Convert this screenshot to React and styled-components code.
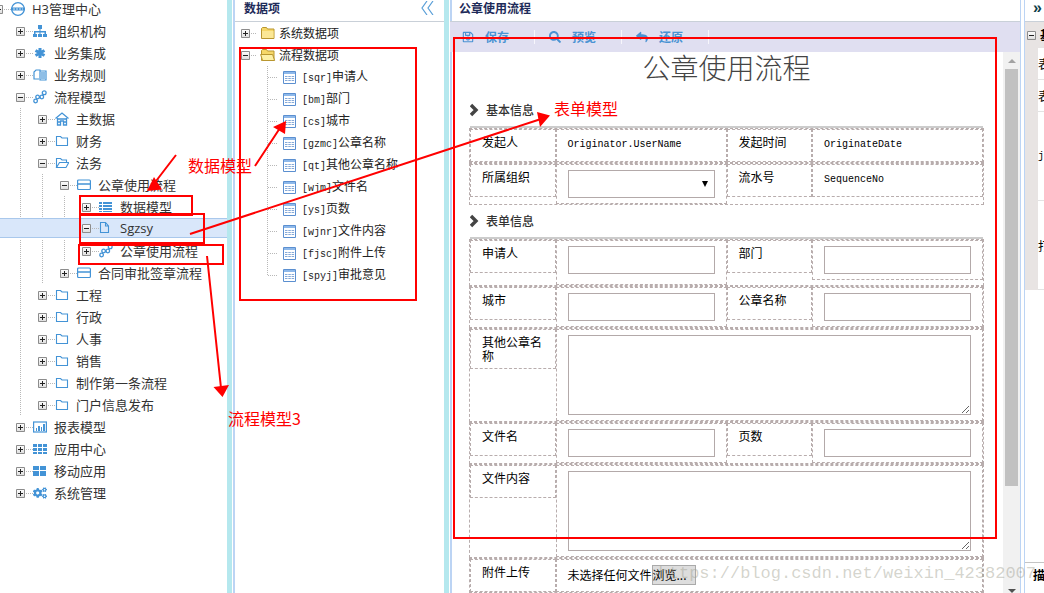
import React from 'react';
import styled, { createGlobalStyle } from 'styled-components';
import { FaCogs, FaSearch, FaReply, FaRegSave } from 'react-icons/fa';

const treeNodes = [
    { depth: 0, open: true, icon: 'globe', label: 'H3管理中心' },
    { depth: 1, icon: 'sitemap', label: '组织机构' },
    { depth: 1, icon: 'asterisk', label: '业务集成' },
    { depth: 1, icon: 'rules', label: '业务规则' },
    { depth: 1, open: true, icon: 'flow', label: '流程模型' },
    { depth: 2, icon: 'home', label: '主数据' },
    { depth: 2, icon: 'folder', label: '财务' },
    { depth: 2, open: true, icon: 'folderOpen', label: '法务' },
    { depth: 3, open: true, icon: 'card', label: '公章使用流程' },
    { depth: 4, icon: 'list', label: '数据模型' },
    { depth: 4, open: true, icon: 'file', label: 'Sgzsy', selected: true },
    { depth: 4, icon: 'flow', label: '公章使用流程' },
    { depth: 3, icon: 'card', label: '合同审批签章流程' },
    { depth: 2, icon: 'folder', label: '工程' },
    { depth: 2, icon: 'folder', label: '行政' },
    { depth: 2, icon: 'folder', label: '人事' },
    { depth: 2, icon: 'folder', label: '销售' },
    { depth: 2, icon: 'folder', label: '制作第一条流程' },
    { depth: 2, icon: 'folder', label: '门户信息发布' },
    { depth: 1, icon: 'chart', label: '报表模型' },
    { depth: 1, icon: 'grid9', label: '应用中心' },
    { depth: 1, icon: 'grid4', label: '移动应用' },
    { depth: 1, icon: 'cogs', label: '系统管理' },
];

const dataItems = [
    ['sqr', '申请人'],
    ['bm', '部门'],
    ['cs', '城市'],
    ['gzmc', '公章名称'],
    ['qt', '其他公章名称'],
    ['wjm', '文件名'],
    ['ys', '页数'],
    ['wjnr', '文件内容'],
    ['fjsc', '附件上传'],
    ['spyj', '审批意见'],
];

const shapes = {
    globe: (
        <g fill="none" stroke="currentColor">
            <circle cx="7" cy="7" r="6.3" strokeWidth="1.2" />
            <path d="M0 7h14" strokeWidth="3" />
            <path d="M2 7h10" stroke="#cfe3f5" strokeDasharray="2 1" />
        </g>
    ),
    sitemap: (
        <path d="M5 1h4v4H7.500v2H13v3h1v3h-4v-3h1.500V8.500h-4V10H9v3H5v-3h1.500V8.500h-4V10H4v3H0v-3h1V7h5.500V5H5z" fill="currentColor" />
    ),
    asterisk: (
        <path d="M7 2v10M2.500 4.500l9 5M11.500 4.500l-9 5" fill="none" stroke="currentColor" strokeWidth="3" />
    ),
    rules: (
        <g fill="none" stroke="currentColor" strokeWidth="1.2">
            <path d="M6 11H1V4l2-2h4v10h6V3H7" />
            <path d="M9 4v7M11 4v7" />
        </g>
    ),
    flow: (
        <g fill="none" stroke="currentColor" strokeWidth="1.3">
            <circle cx="2.6" cy="11" r="1.8" />
            <circle cx="4.6" cy="7" r="1.8" />
            <circle cx="8.8" cy="7" r="1.8" />
            <circle cx="11.2" cy="2.8" r="1.9" />
            <path d="M6 7.500h1.500M10 5.500l.5-1" />
        </g>
    ),
    home: (
        <g fill="none" stroke="currentColor" strokeWidth="1.3">
            <path d="M.5 6.500L7 1l6.500 5.500" />
            <path d="M2.500 6v7h3V9h3v4h3V6M2 7h10M3 10h3M8 10h3" />
        </g>
    ),
    folder: <path d="M1.500 11.500v-9h4L7 4h5.500v7.500z" fill="none" stroke="currentColor" strokeWidth="1.1" />,
    folderOpen: (
        <path
            d="M1.500 11.500v-9h4L7 4h4.500v2.500M1.500 11.500l3-5h9.300l-2.800 5z"
            fill="none"
            stroke="currentColor"
            strokeWidth="1.1"
        />
    ),
    card: (
        <g fill="none" stroke="currentColor">
            <rect x=".6" y="2" width="12.8" height="9.500" rx="1" strokeWidth="1.2" />
            <path d="M1 6h12" strokeWidth="1.5" />
        </g>
    ),
    list: (
        <path d="M0 2h3v2H0zM4 2h9v2H4zM0 5h3v2H0zM4 5h9v2H4zM0 8h3v2H0zM4 8h9v2H4zM0 11h3v1H0zM4 11h9v1H4z" fill="currentColor" />
    ),
    file: (
        <path d="M1.500 1.500h5l3 3.500v6.500h-8zM6.500 1.500V5h3" fill="none" stroke="currentColor" strokeWidth="1.1" />
    ),
    chart: (
        <g>
            <rect x=".6" y="2" width="12.800" height="10" fill="none" stroke="currentColor" strokeWidth="1.2" />
            <path d="M3 8h1v3H3zM5 6h2v5H5zM8 7h1v4H8zM10 4h2v7h-2z" fill="currentColor" />
        </g>
    ),
    grid9: (
        <path d="M0 2h4v3H0zM5 2h4v3H5zM10 2h4v3h-4zM0 6h4v3H0zM5 6h4v3H5zM10 6h4v3h-4zM0 10h4v2H0zM5 10h4v2H5zM10 10h4v2h-4z" fill="currentColor" />
    ),
    grid4: <path d="M0 2h6v4H0zM7 2h6v4H7zM0 7h6v5H0zM7 7h6v5H7z" fill="currentColor" />,
};

function NodeIcon({ name }) {
    if (name === 'cogs') return <FaCogs size={14} />;
    return <svg width="14" height="14" viewBox="0 0 14 14">{shapes[name]}</svg>;
}

function Toggle({ open }) {
    return (
        <ToggleButton type="button" aria-label={open ? '收起' : '展开'}>
            <svg width="9" height="9" viewBox="0 0 9 9">
                <path d={open ? 'M2 4h5v1H2z' : 'M2 4h5v1H2zM4 2h1v5H4z'} fill="#222" />
            </svg>
        </ToggleButton>
    );
}

function YellowFolder({ open }) {
    return (
        <svg width="16" height="14" viewBox="0 0 16 14">
            <path d="M1.500 12.500v-10l1-1h4l1 1.500h6.500v9.500z" fill="#f6d768" stroke="#b8962f" />
            {open
                ? <path d="M.6 6.500h12l2 6h-12z" fill="#fdf0a6" stroke="#b8962f" />
                : <path d="M2 5h11.500v7H2z" fill="#fbe795" />}
        </svg>
    );
}

function TableIcon() {
    return (
        <svg width="13" height="13" viewBox="0 0 13 13">
            <path d="M.5.5h12v12H.5z" fill="#fff" stroke="#5b8fd0" />
            <path d="M1 1h11v2H1z" fill="#8db8ea" />
            <path d="M2 5.500h2.500M5.300 5.500h2.500M8.600 5.500h2.500M2 7.500h2.500M5.300 7.500h2.500M8.600 7.500h2.500M2 9.500h2.500M5.300 9.500h2.500M8.600 9.500h2.500" stroke="#85a9d8" />
        </svg>
    );
}

function SectionHead({ children }) {
    return (
        <SectionTitle>
            <svg width="9" height="14" viewBox="0 0 9 14">
                <path d="M1 2l5 5-5 5" fill="none" stroke="#444" strokeWidth="3.4" />
            </svg>
            {children}
        </SectionTitle>
    );
}

function TextField({ id, label, tall }) {
    return (
        <>
            <Cell><label htmlFor={id}>{label}</label></Cell>
            <Cell $tall={tall}><Input id={id} type="text" /></Cell>
        </>
    );
}

function AreaField({ id, label }) {
    return (
        <FormRow>
            <Cell><label htmlFor={id}>{label}</label></Cell>
            <Cell $wide><TextArea id={id} /></Cell>
        </FormRow>
    );
}

function App() {
    return (
        <Page>
            <GlobalStyle />

            <Sidebar>
                <TreeList>
                    {treeNodes.map((node, i) => (
                        <TreeRow key={i} $selected={node.selected}>
                            {Array.from({ length: node.depth }, (_, level) => (
                                <Guide key={level} $line={level > 0 && !node.selected} />
                            ))}
                            <Toggle open={node.open} />
                            <Dots $width={8} />
                            <IconBox><NodeIcon name={node.icon} /></IconBox>
                            <TreeLabel>{node.label}</TreeLabel>
                        </TreeRow>
                    ))}
                </TreeList>
            </Sidebar>

            <Splitter />

            <DataPanel>
                <PanelHeader>
                    数据项
                    <CollapseButton type="button" aria-label="折叠">
                        <svg width="14" height="14" viewBox="0 0 14 14">
                            <path d="M6 0L1 7l5 7M12 0L7 7l5 7" fill="none" stroke="#5a9fd8" strokeWidth="1.2" />
                        </svg>
                    </CollapseButton>
                </PanelHeader>
                <DataTree>
                    <DataRow>
                        <Toggle />
                        <Dots $width={6} />
                        <FolderBox><YellowFolder /></FolderBox>
                        系统数据项
                    </DataRow>
                    <DataRow>
                        <Toggle open />
                        <Dots $width={6} />
                        <FolderBox><YellowFolder open /></FolderBox>
                        流程数据项
                    </DataRow>
                    <DataBranch>
                        {dataItems.map(([code, name]) => (
                            <DataRow as="div" key={code}>
                                <Dots $width={10} />
                                <TableBox><TableIcon /></TableBox>
                                <span><Code>[{code}]</Code>{name}</span>
                            </DataRow>
                        ))}
                    </DataBranch>
                </DataTree>
            </DataPanel>

            <Splitter />

            <FormPanel>
                <PanelHeader>公章使用流程</PanelHeader>
                <Toolbar>
                    <ToolButton type="button"><FaRegSave size={12} />保存</ToolButton>
                    <ToolButton type="button"><FaSearch size={12} />预览</ToolButton>
                    <ToolButton type="button"><FaReply size={12} />还原</ToolButton>
                </Toolbar>
                <FormBody>
                    <Sheet>
                        <SheetTitle>公章使用流程</SheetTitle>

                        <SectionHead>基本信息</SectionHead>
                        <FormRow>
                            <Cell>发起人</Cell>
                            <Cell><Code>Originator.UserName</Code></Cell>
                            <Cell>发起时间</Cell>
                            <Cell><Code>OriginateDate</Code></Cell>
                        </FormRow>
                        <FormRow>
                            <Cell><label htmlFor="org">所属组织</label></Cell>
                            <Cell>
                                <SelectBox>
                                    <Select id="org" />
                                    <svg width="6" height="6" viewBox="0 0 6 6">
                                        <path d="M0 0h6L3 6z" fill="#000" />
                                    </svg>
                                </SelectBox>
                            </Cell>
                            <Cell>流水号</Cell>
                            <Cell><Code>SequenceNo</Code></Cell>
                        </FormRow>

                        <SectionHead>表单信息</SectionHead>
                        <FormRow>
                            <TextField id="sqr" label="申请人" tall />
                            <TextField id="bm" label="部门" />
                        </FormRow>
                        <FormRow>
                            <TextField id="cs" label="城市" />
                            <TextField id="gzmc" label="公章名称" />
                        </FormRow>
                        <AreaField id="qt" label="其他公章名称" />
                        <FormRow>
                            <TextField id="wjm" label="文件名" />
                            <TextField id="ys" label="页数" />
                        </FormRow>
                        <AreaField id="wjnr" label="文件内容" />
                        <FormRow>
                            <Cell>附件上传</Cell>
                            <Cell $wide>
                                <FilePicker>
                                    未选择任何文件
                                    <Browse>浏览...</Browse>
                                    <input type="file" hidden />
                                </FilePicker>
                            </Cell>
                        </FormRow>
                    </Sheet>
                    <ScrollTrack>
                        <Arrow $color="#a3a3a3" />
                        <ScrollThumb />
                        <Arrow $down $color="#505050" />
                    </ScrollTrack>
                </FormBody>
            </FormPanel>

            <PropsPanel>
                <PropsHeader>»</PropsHeader>
                <PropsGroup><Toggle open />基本</PropsGroup>
                <PropsItem $height={32}>表单</PropsItem>
                <PropsItem $height={32}>表单</PropsItem>
                <PropsItem $height={89}><Code>js</Code></PropsItem>
                <PropsItem $height={89}>打印</PropsItem>
                <PropsFooter>描述</PropsFooter>
            </PropsPanel>

            <Watermark>https://blog.csdn.net/weixin_42382007</Watermark>

            {/* Notes drawn over the panels */}
            <Markup width="1044" height="593" viewBox="0 0 1044 593">
                <g fill="none" stroke="#f00" strokeWidth="2">
                    <path d="M240 48h176v252H240zM454 38h542v500H454z" />
                    <path d="M80 196h112v19H80zM80 214h124v29H80zM79 245h144v19H79z" />
                    <path d="M176 155L153 185M255 166L280 128M190 234L541 119M207 256L221 388" />
                </g>
                <path
                    d="M147 191l7-14 8 12.500zM286 121l-13 6 12 7zM550 115.500l-13-3.500 3 15zM222.500 397l-9-10 15.500-2z"
                    fill="#f00"
                />
            </Markup>
            <Note $left={188} $top={153}>数据模型</Note>
            <Note $left={554} $top={96}>表单模型</Note>
            <Note $left={228} $top={406}>流程模型3</Note>
        </Page>
    );
}

const GlobalStyle = createGlobalStyle`
    * {
        box-sizing: border-box;
    }

    body {
        margin: 0;
        overflow: hidden;
        background: #fff;
        color: #000;
        font: 12px/14px "Noto Sans CJK SC", sans-serif;
    }

    button, input, select, textarea {
        font: inherit;
        margin: 0;
    }

    ul {
        list-style: none;
        margin: 0;
        padding: 0;
    }

    svg {
        display: block;
        flex: none;
    }
`;

const Page = styled.div`
    position: relative;
    display: flex;
    height: 100vh;
    overflow: hidden;
`;

const Sidebar = styled.nav`
    flex: 0 0 227px;
    overflow: hidden;
`;

const TreeList = styled.ul`
    margin-top: -2px;
`;

const TreeRow = styled.li`
    display: flex;
    align-items: center;
    height: ${p => (p.$selected ? '20px' : '22px')};
    margin-bottom: ${p => (p.$selected ? '2px' : '0')};
    border: solid #a9c8ec;
    border-width: ${p => (p.$selected ? '1px 0' : '0')};
    background: ${p => (p.$selected ? '#d9e7fa' : 'none')};

    > :first-child {
        margin-left: -6px;
    }
`;

const Guide = styled.span`
    flex: 0 0 22px;
    align-self: stretch;
    background: ${p => (p.$line
        ? 'repeating-linear-gradient(#b8b8b8 0 1px, transparent 1px 2px) 4px 0 / 1px 100% no-repeat'
        : 'none')};
`;

const ToggleButton = styled.button`
    display: block;
    flex: 0 0 9px;
    height: 9px;
    padding: 0;
    border: 0;
    border-radius: 1px;
    box-shadow: inset 0 0 0 1px #8c8c8c;
    background: linear-gradient(#fff, #dcdcdc);
`;

const Dots = styled.span`
    flex: 0 0 ${p => p.$width}px;
    height: 1px;
    background: repeating-linear-gradient(90deg, transparent 0 1px, #b8b8b8 1px 2px);
`;

const IconBox = styled.span`
    flex: 0 0 14px;
    color: #4393d6;
`;

const TreeLabel = styled.span`
    margin-left: 7px;
    color: #333;
    font: 13px/18px "Open Sans", "Noto Sans CJK SC", sans-serif;
    white-space: nowrap;
`;

const Splitter = styled.div`
    flex: 0 0 8px;
    border-right: 2px solid #bcd4f4;
    background: linear-gradient(90deg, #b5e8ee 5px, #fff 5px);

    & + main {
        margin-left: -2px;
    }
`;

const DataPanel = styled.section`
    flex: 0 0 209px;
    overflow: hidden;
`;

const PanelHeader = styled.header`
    display: flex;
    align-items: center;
    justify-content: space-between;
    height: 22px;
    padding: 0 9px 5px;
    border-bottom: 1px solid #c9d0d8;
    color: #1e2b59;
    font-weight: 700;
`;

const CollapseButton = styled.button`
    padding: 0;
    border: 0;
    background: none;
`;

const DataTree = styled.ul`
    padding-left: 6px;
    color: #222;
    white-space: nowrap;
`;

const DataRow = styled.li`
    display: flex;
    align-items: center;
    height: 22px;
`;

const FolderBox = styled.span`
    margin: 0 3px 0 4px;
`;

const DataBranch = styled.li`
    margin-left: 26px;
    background: repeating-linear-gradient(#b8b8b8 0 1px, transparent 1px 2px) 0 0 / 1px 209px no-repeat;
`;

const TableBox = styled.span`
    margin: 0 6px;
`;

const Code = styled.span`
    font-family: "Liberation Mono", monospace;
    font-size: 10px;
`;

const FormPanel = styled.main`
    flex: 1;
    display: flex;
    flex-direction: column;
    min-width: 0;
    border-right: 1px solid #bcd4f4;
`;

const Toolbar = styled.div`
    display: flex;
    align-items: center;
    flex: 0 0 30px;
    background: #e0dff1;
`;

const ToolButton = styled.button`
    display: flex;
    align-items: center;
    gap: 11px;
    height: 14px;
    padding: 0 25px 0 14px;
    border: 0;
    border-right: 1px solid #f7f6fc;
    background: none;
    color: #4a93d3;
    font-weight: 700;

    &:first-child {
        padding-left: 12px;
    }
`;

const FormBody = styled.div`
    display: flex;
    flex: 1;
    min-height: 0;
    overflow: hidden;
`;

const Sheet = styled.form`
    flex: 1;
    min-width: 0;
    padding: 0 19px;
`;

const SheetTitle = styled.h1`
    height: 42px;
    margin: 0;
    color: #444;
    font-size: 28px;
    font-weight: 300;
    line-height: 30px;
    text-align: center;
`;

const SectionTitle = styled.h2`
    display: flex;
    align-items: center;
    gap: 7px;
    height: 34px;
    margin: 0 1px;
    border-bottom: 2px solid #ccc;
    color: #333;
    font-size: 12px;
    font-weight: 500;
`;

const FormRow = styled.div`
    display: grid;
    grid-template-columns: 1fr 2fr 1fr 2fr;
    align-items: start;
    border: 1px dashed #b8adad;
`;

const Cell = styled.div`
    grid-column: ${p => (p.$wide ? 'span 3' : 'auto')};
    min-width: 0;
    min-height: 33px;
    padding: 5px 11px ${p => (p.$tall ? '10px' : '5px')};
    border: 1px dashed #b8adad;
`;

const Input = styled.input`
    display: block;
    width: 100%;
    height: 28px;
    padding: 0 6px;
    border: 1px solid #b3a9a9;
    background: #fff;
`;

const TextArea = styled.textarea`
    display: block;
    width: 100%;
    height: 80px;
    border: 1px solid #b3a9a9;
`;

const SelectBox = styled.div`
    position: relative;

    svg {
        position: absolute;
        top: 11px;
        right: 7px;
        pointer-events: none;
    }
`;

const Select = styled.select`
    display: block;
    width: 100%;
    height: 28px;
    border: 1px solid #b3a9a9;
    border-radius: 0;
    background: #fff;
    appearance: none;
`;

const FilePicker = styled.label`
    display: flex;
    align-items: center;
`;

const Browse = styled.span`
    width: 44px;
    height: 20px;
    border: 1px solid #aaa;
    background: #ddd;
    line-height: 18px;
    white-space: nowrap;
`;

const ScrollTrack = styled.div`
    display: flex;
    flex-direction: column;
    align-items: center;
    flex: 0 0 17px;
    padding-top: 7px;
    background: #f1f1f1;
`;

const Arrow = styled.span`
    border: 4px solid transparent;
    border-top: ${p => (p.$down ? `4px solid ${p.$color}` : '0')};
    border-bottom: ${p => (p.$down ? '0' : `4px solid ${p.$color}`)};
`;

const ScrollThumb = styled.div`
    width: 13px;
    height: 78%;
    margin: 6px 0 auto;
    background: #c1c1c1;
`;

const PropsPanel = styled.aside`
    display: flex;
    flex-direction: column;
    flex: 0 0 20px;
    margin-left: 3px;
    border-left: 1px solid #bcd4f4;
    overflow: hidden;
    white-space: nowrap;
`;

const PropsHeader = styled.header`
    height: 22px;
    padding-left: 8px;
    border-bottom: 1px solid #c9d0d8;
    color: #0f4049;
    font: 700 16px/16px "Liberation Sans", sans-serif;
`;

const PropsGroup = styled.div`
    display: flex;
    align-items: center;
    gap: 4px;
    height: 26px;
    padding-left: 2px;
    background: #e8e4e3;
    font-weight: 700;
`;

const PropsItem = styled.div`
    display: flex;
    align-items: center;
    height: ${p => p.$height}px;
    border-left: 13px solid #e8e4e3;
    box-shadow: inset 0 -1px #e3e3e3;
`;

const PropsFooter = styled.footer`
    height: 31px;
    margin-top: auto;
    padding: 5px 0 0 8px;
    border-top: 1px solid #c4c4c4;
    font-weight: 700;
`;

const Watermark = styled.div`
    position: absolute;
    right: 8px;
    bottom: 9px;
    color: rgba(160, 160, 145, 0.45);
    font: 17px/20px "Liberation Mono", monospace;
    pointer-events: none;
`;

const Markup = styled.svg`
    position: absolute;
    top: 0;
    left: 0;
    pointer-events: none;
`;

const Note = styled.span`
    position: absolute;
    left: ${p => p.$left}px;
    top: ${p => p.$top}px;
    color: #f00;
    font-size: 16px;
    line-height: 24px;
    white-space: nowrap;
`;

export default App;
